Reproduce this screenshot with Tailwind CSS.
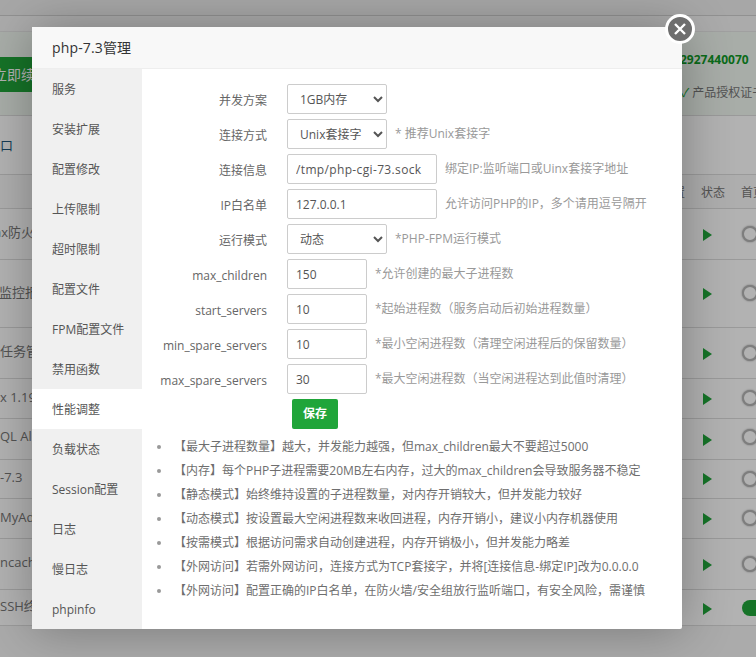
<!DOCTYPE html>
<html lang="en">
<head>
  <meta charset="UTF-8" />
  <title>php-7.3管理</title>
  <script src="https://cdn.jsdelivr.net/npm/@tailwindcss/browser@4"></script>
</head>
<body class="relative h-[657px] w-[756px] overflow-hidden bg-white font-['Open_Sans','Noto_Sans_CJK_SC',sans-serif] text-xs text-[#666]">

  <!-- page behind the dialog -->
  <div class="h-[657px] bg-[#f5f5f5] text-[#777]">
    <div class="h-[16px] border-b border-[#d0d0d0] bg-[#f0f0f0]"></div>
    <div class="h-[16px] border-b border-[#e5e5e5] bg-[#f5f5f5]"></div>
    <div class="relative h-[84px] border-b border-[#ddd] bg-[#f1f8f1]">
      <div class="absolute left-0 top-[25px] flex h-[35px] w-[60px] items-center overflow-hidden bg-[#20a53a] text-sm text-white"><span class="-ml-[7px] whitespace-nowrap">立即续费</span></div>
      <span class="absolute left-[680px] top-[20px] text-xs font-bold text-[#109a28]">2927440070</span>
      <span class="absolute left-[681px] top-[53px] whitespace-nowrap text-xs"><span class="text-[#20a53a]">✓</span> 产品授权证书</span>
    </div>
    <div class="flex h-[59px] items-center border-b border-[#ddd] bg-white pt-[1px] text-[13px] text-[#20577a]">口</div>
    <div class="relative h-[34px] border-b border-[#ddd] bg-[#fafafa]">
      <span class="absolute left-[673px] top-[10px]">置</span>
      <span class="absolute left-[701px] top-[10px]">状态</span>
      <span class="absolute left-[741px] top-[10px] whitespace-nowrap">首页</span>
    </div>
    <div class="relative h-[51px] border-b border-[#ddd] bg-white"><span class="absolute -left-[6px] top-[15px] text-[13px]">ax防火墙</span><span class="absolute left-[703px] top-[20px] h-0 w-0 border-y-[6px] border-l-[9px] border-y-transparent border-l-[#20a53a]"></span><span class="absolute left-[742px] top-[17px] h-[16px] w-[16px] rounded-full border-2 border-[#b5b5b5] bg-white shadow-[0_0_2px_rgba(0,0,0,0.4)]"></span></div>
    <div class="relative h-[68px] border-b border-[#ddd] bg-white"><span class="absolute -left-[1px] top-[24px] text-[13px]">监控报</span><span class="absolute left-[703px] top-[28px] h-0 w-0 border-y-[6px] border-l-[9px] border-y-transparent border-l-[#20a53a]"></span><span class="absolute left-[742px] top-[25px] h-[16px] w-[16px] rounded-full border-2 border-[#b5b5b5] bg-white shadow-[0_0_2px_rgba(0,0,0,0.4)]"></span></div>
    <div class="relative h-[51px] border-b border-[#ddd] bg-white"><span class="absolute left-0 top-[15px] text-[13px]">任务管</span><span class="absolute left-[703px] top-[20px] h-0 w-0 border-y-[6px] border-l-[9px] border-y-transparent border-l-[#20a53a]"></span><span class="absolute left-[742px] top-[17px] h-[16px] w-[16px] rounded-full border-2 border-[#b5b5b5] bg-white shadow-[0_0_2px_rgba(0,0,0,0.4)]"></span></div>
    <div class="relative h-[40px] border-b border-[#ddd] bg-white"><span class="absolute left-0 top-[10px] text-[13px]">x 1.19</span><span class="absolute left-[703px] top-[14px] h-0 w-0 border-y-[6px] border-l-[9px] border-y-transparent border-l-[#20a53a]"></span><span class="absolute left-[742px] top-[11px] h-[16px] w-[16px] rounded-full border-2 border-[#b5b5b5] bg-white shadow-[0_0_2px_rgba(0,0,0,0.4)]"></span></div>
    <div class="relative h-[41px] border-b border-[#ddd] bg-white"><span class="absolute left-0 top-[9px] text-[13px]">QL Ali</span><span class="absolute left-[703px] top-[15px] h-0 w-0 border-y-[6px] border-l-[9px] border-y-transparent border-l-[#20a53a]"></span><span class="absolute left-[742px] top-[10px] h-[16px] w-[16px] rounded-full border-2 border-[#b5b5b5] bg-white shadow-[0_0_2px_rgba(0,0,0,0.4)]"></span></div>
    <div class="relative h-[39px] border-b border-[#ddd] bg-white"><span class="absolute left-0 top-[9px] text-[13px]">-7.3</span><span class="absolute left-[703px] top-[13px] h-0 w-0 border-y-[6px] border-l-[9px] border-y-transparent border-l-[#20a53a]"></span><span class="absolute left-[742px] top-[11px] h-[16px] w-[16px] rounded-full border-2 border-[#b5b5b5] bg-white shadow-[0_0_2px_rgba(0,0,0,0.4)]"></span></div>
    <div class="relative h-[40px] border-b border-[#ddd] bg-white"><span class="absolute left-0 top-[10px] text-[13px]">MyAdmin</span><span class="absolute left-[703px] top-[14px] h-0 w-0 border-y-[6px] border-l-[9px] border-y-transparent border-l-[#20a53a]"></span><span class="absolute left-[742px] top-[11px] h-[16px] w-[16px] rounded-full border-2 border-[#b5b5b5] bg-white shadow-[0_0_2px_rgba(0,0,0,0.4)]"></span></div>
    <div class="relative h-[51px] border-b border-[#ddd] bg-white"><span class="absolute left-0 top-[15px] text-[13px]">ncache</span><span class="absolute left-[703px] top-[20px] h-0 w-0 border-y-[6px] border-l-[9px] border-y-transparent border-l-[#20a53a]"></span><span class="absolute left-[742px] top-[17px] h-[16px] w-[16px] rounded-full border-2 border-[#b5b5b5] bg-white shadow-[0_0_2px_rgba(0,0,0,0.4)]"></span></div>
    <div class="relative h-[36px] border-b border-[#ddd] bg-white"><span class="absolute left-0 top-[8px] text-[13px]">SSH终端</span><span class="absolute left-[703px] top-[13px] h-0 w-0 border-y-[6px] border-l-[9px] border-y-transparent border-l-[#20a53a]"></span><span class="absolute left-[742px] top-[10px] h-[16px] w-[30px] rounded-full bg-[#20a53a]"></span></div>
  </div>

  <!-- overlay -->
  <div class="absolute inset-0 bg-black/30"></div>

  <!-- dialog -->
  <div class="absolute left-[32px] top-[27px] h-[602px] w-[650px] rounded-[2px] bg-white shadow-[1px_1px_50px_rgba(0,0,0,0.3)]">
    <div class="flex h-[42px] items-center border-b border-[#eee] bg-[#f8f8f8] px-[20px] text-sm tracking-[0.15px] text-[#333]">php-7.3管理</div>

    <div class="flex h-[560px]">
      <ul class="w-[110px] bg-[#f0f0f0] text-[#555]">
        <li class="flex h-[40px] items-center pl-[20px] pt-[2px]">服务</li>
        <li class="flex h-[40px] items-center pl-[20px] pt-[2px]">安装扩展</li>
        <li class="flex h-[40px] items-center pl-[20px] pt-[2px]">配置修改</li>
        <li class="flex h-[40px] items-center pl-[20px] pt-[2px]">上传限制</li>
        <li class="flex h-[40px] items-center pl-[20px] pt-[2px]">超时限制</li>
        <li class="flex h-[40px] items-center pl-[20px] pt-[2px]">配置文件</li>
        <li class="flex h-[40px] items-center pl-[20px] pt-[2px]">FPM配置文件</li>
        <li class="flex h-[40px] items-center pl-[20px] pt-[2px]">禁用函数</li>
        <li class="flex h-[40px] items-center bg-white pl-[20px] pt-[2px]">性能调整</li>
        <li class="flex h-[40px] items-center pl-[20px] pt-[2px]">负载状态</li>
        <li class="flex h-[40px] items-center pl-[20px] pt-[2px]">Session配置</li>
        <li class="flex h-[40px] items-center pl-[20px] pt-[2px]">日志</li>
        <li class="flex h-[40px] items-center pl-[20px] pt-[2px]">慢日志</li>
        <li class="flex h-[40px] items-center pl-[20px] pt-[2px]">phpinfo</li>
      </ul>

      <div class="flex-1 pt-[15px]">
        <div class="mb-[5px] flex h-[30px] items-center">
          <label class="mr-[20px] w-[125px] pt-[3px] text-right">并发方案</label>
          <select class="h-[30px] w-[100px] rounded-[2px] border border-[#ccc] bg-white pl-[8px] text-[#555]"><option>1GB内存</option></select>
        </div>
        <div class="mb-[5px] flex h-[30px] items-center">
          <label class="mr-[20px] w-[125px] pt-[3px] text-right">连接方式</label>
          <select class="h-[30px] w-[100px] rounded-[2px] border border-[#ccc] bg-white pl-[8px] text-[#555]"><option>Unix套接字</option></select>
          <span class="ml-[8px] text-[#999]">* 推荐Unix套接字</span>
        </div>
        <div class="mb-[5px] flex h-[30px] items-center">
          <label class="mr-[20px] w-[125px] pt-[3px] text-right">连接信息</label>
          <input class="h-[30px] w-[150px] rounded-[2px] border border-[#ccc] px-[8px] tracking-[0.35px] text-[#555]" value="/tmp/php-cgi-73.sock" />
          <span class="ml-[8px] text-[#999]">绑定IP:监听端口或Uinx套接字地址</span>
        </div>
        <div class="mb-[5px] flex h-[30px] items-center">
          <label class="mr-[20px] w-[125px] pt-[3px] text-right">IP白名单</label>
          <input class="h-[30px] w-[150px] rounded-[2px] border border-[#ccc] px-[8px] text-[#555]" value="127.0.0.1" />
          <span class="ml-[8px] text-[#999]">允许访问PHP的IP，多个请用逗号隔开</span>
        </div>
        <div class="mb-[5px] flex h-[30px] items-center">
          <label class="mr-[20px] w-[125px] pt-[3px] text-right">运行模式</label>
          <select class="h-[30px] w-[100px] rounded-[2px] border border-[#ccc] bg-white pl-[8px] text-[#555]"><option>动态</option></select>
          <span class="ml-[8px] text-[#999]">*PHP-FPM运行模式</span>
        </div>
        <div class="mb-[5px] flex h-[30px] items-center">
          <label class="mr-[20px] w-[125px] pt-[3px] text-right">max_children</label>
          <input class="h-[30px] w-[80px] rounded-[2px] border border-[#ccc] px-[8px] text-[#555]" value="150" />
          <span class="ml-[8px] text-[#999]">*允许创建的最大子进程数</span>
        </div>
        <div class="mb-[5px] flex h-[30px] items-center">
          <label class="mr-[20px] w-[125px] pt-[3px] text-right">start_servers</label>
          <input class="h-[30px] w-[80px] rounded-[2px] border border-[#ccc] px-[8px] text-[#555]" value="10" />
          <span class="ml-[8px] text-[#999]">*起始进程数（服务启动后初始进程数量）</span>
        </div>
        <div class="mb-[5px] flex h-[30px] items-center">
          <label class="mr-[20px] w-[125px] pt-[3px] text-right">min_spare_servers</label>
          <input class="h-[30px] w-[80px] rounded-[2px] border border-[#ccc] px-[8px] text-[#555]" value="10" />
          <span class="ml-[8px] text-[#999]">*最小空闲进程数（清理空闲进程后的保留数量）</span>
        </div>
        <div class="mb-[5px] flex h-[30px] items-center">
          <label class="mr-[20px] w-[125px] pt-[3px] text-right">max_spare_servers</label>
          <input class="h-[30px] w-[80px] rounded-[2px] border border-[#ccc] px-[8px] text-[#555]" value="30" />
          <span class="ml-[8px] text-[#999]">*最大空闲进程数（当空闲进程达到此值时清理）</span>
        </div>
        <button class="ml-[150px] h-[30px] w-[46px] rounded-[2px] bg-[#20a53a] font-bold text-white">保存</button>

        <ul class="mt-[6px] pl-[15px] text-[#6e6e6e]">
          <li class="flex h-[24px] items-center"><span class="mr-[13px] h-[4px] w-[4px] rounded-full bg-[#999]"></span>【最大子进程数量】越大，并发能力越强，但max_children最大不要超过5000</li>
          <li class="flex h-[24px] items-center"><span class="mr-[13px] h-[4px] w-[4px] rounded-full bg-[#999]"></span>【内存】每个PHP子进程需要20MB左右内存，过大的max_children会导致服务器不稳定</li>
          <li class="flex h-[24px] items-center"><span class="mr-[13px] h-[4px] w-[4px] rounded-full bg-[#999]"></span>【静态模式】始终维持设置的子进程数量，对内存开销较大，但并发能力较好</li>
          <li class="flex h-[24px] items-center"><span class="mr-[13px] h-[4px] w-[4px] rounded-full bg-[#999]"></span>【动态模式】按设置最大空闲进程数来收回进程，内存开销小，建议小内存机器使用</li>
          <li class="flex h-[24px] items-center"><span class="mr-[13px] h-[4px] w-[4px] rounded-full bg-[#999]"></span>【按需模式】根据访问需求自动创建进程，内存开销极小，但并发能力略差</li>
          <li class="flex h-[24px] items-center"><span class="mr-[13px] h-[4px] w-[4px] rounded-full bg-[#999]"></span>【外网访问】若需外网访问，连接方式为TCP套接字，并将[连接信息-绑定IP]改为0.0.0.0</li>
          <li class="flex h-[24px] items-center"><span class="mr-[13px] h-[4px] w-[4px] rounded-full bg-[#999]"></span>【外网访问】配置正确的IP白名单，在防火墙/安全组放行监听端口，有安全风险，需谨慎</li>
        </ul>
      </div>
    </div>

    <!-- close button -->
    <button class="absolute -right-[13px] -top-[13px] flex h-[30px] w-[30px] items-center justify-center rounded-full border-[3px] border-white bg-[#6e6e6e]">
      <svg width="14" height="14" viewBox="0 0 14 14" fill="none" stroke="white" stroke-width="2.4"><path d="M2 2l10 10M12 2L2 12" /></svg>
    </button>
  </div>
</body>
</html>
